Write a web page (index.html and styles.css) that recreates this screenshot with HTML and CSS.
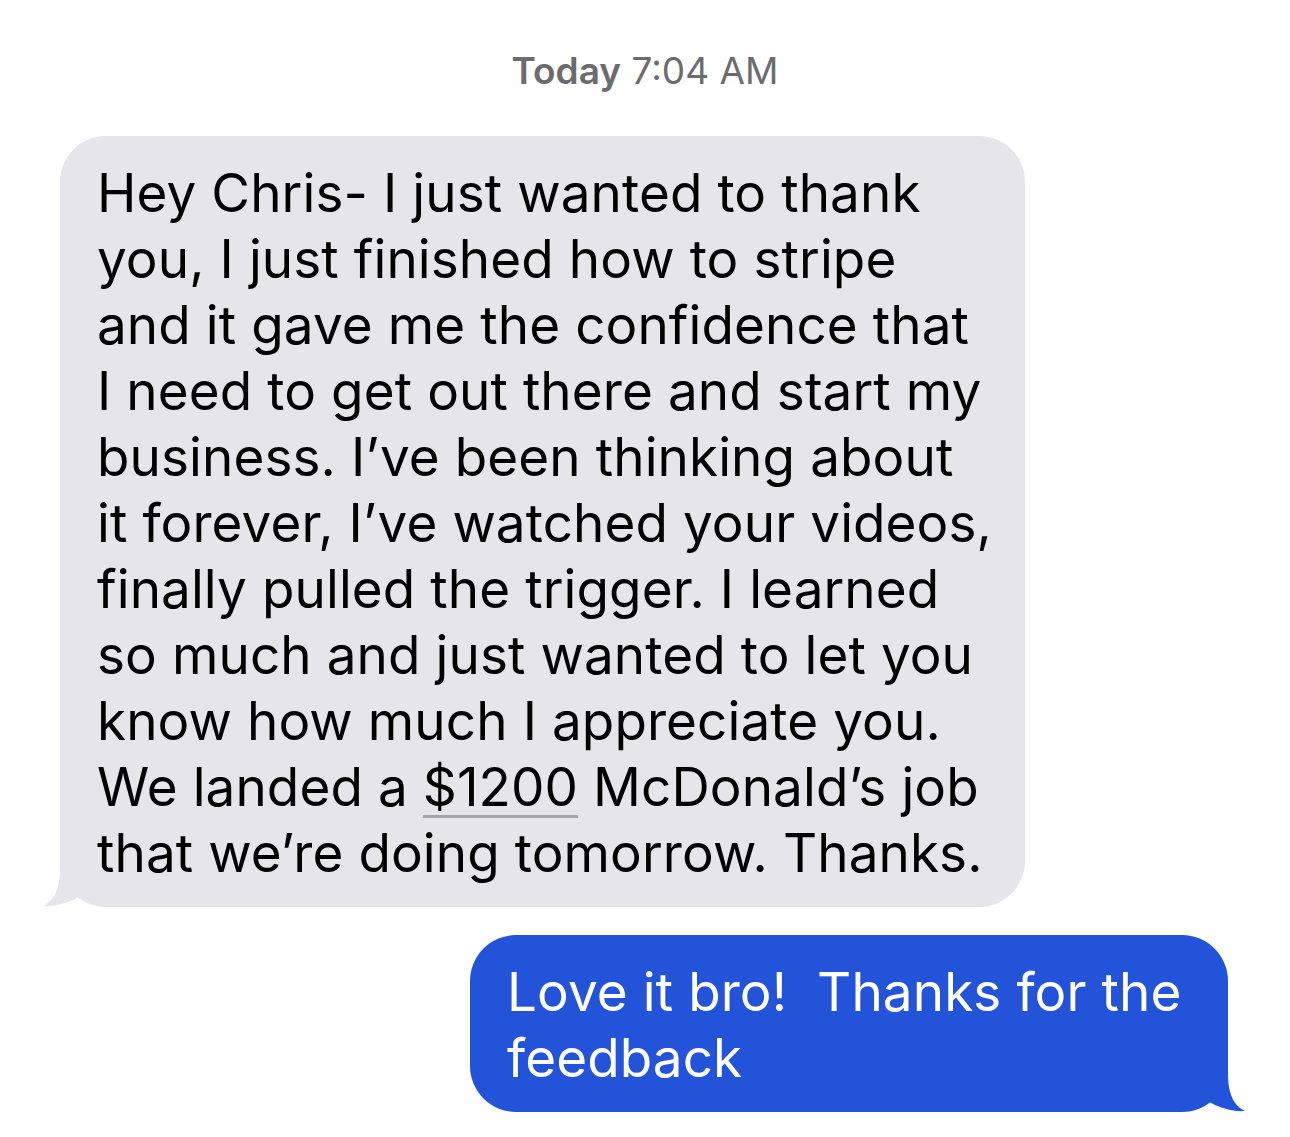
FILE: index.html
```html
<!DOCTYPE html>
<html>
<head>
<meta charset="utf-8">
<link rel="stylesheet" href="styles.css">
</head>
<body>
<div class="thread">
  <div class="stamp"><span class="day">Today</span> 7:04 AM</div>
  <div class="row row-in">
    <div class="bubble in">
      <span class="line">Hey Chris- I just wanted to thank</span>
      <span class="line">you, I just finished how to stripe</span>
      <span class="line">and it gave me the confidence that</span>
      <span class="line">I need to get out there and start my</span>
      <span class="line">business. I’ve been thinking about</span>
      <span class="line">it forever, I’ve watched your videos,</span>
      <span class="line">finally pulled the trigger. I learned</span>
      <span class="line">so much and just wanted to let you</span>
      <span class="line">know how much I appreciate you.</span>
      <span class="line">We landed a <span class="link">$1200</span> McDonald’s job</span>
      <span class="line">that we’re doing tomorrow. Thanks.</span>
      <svg class="tail tail-in" width="60" height="52" viewBox="0 0 60 52"><path d="M17 0 L17 14 C17 36 10 46 0 51 C 14 52 28 47 37 41 L 37 0 Z"/></svg>
    </div>
  </div>
  <div class="row row-out">
    <div class="bubble out">
      <span class="line">Love it bro!&nbsp; Thanks for the</span>
      <span class="line">feedback</span>
      <svg class="tail tail-out" width="60" height="52" viewBox="0 0 60 52"><path d="M43 0 L43 14 C43 36 50 46 60 51 C 46 52 32 47 23 41 L 23 0 Z"/></svg>
    </div>
  </div>
</div>
</body>
</html>
```

FILE: styles.css
```css
html, body {
  margin: 0;
  padding: 0;
  background: #ffffff;
}
body {
  font-family: Inter, "Noto Sans", sans-serif;
  width: 1290px;
  height: 1137px;
  overflow: hidden;
}
.thread {
  display: flex;
  flex-direction: column;
  padding-top: 47px;
}
.stamp {
  text-align: center;
  font-size: 37px;
  line-height: 48px;
  color: #6c6c70;
  margin-bottom: 41px;
}
.day {
  font-weight: 600;
}
.row {
  display: flex;
}
.row-in {
  padding-left: 60px;
  justify-content: flex-start;
}
.row-out {
  padding-right: 62px;
  justify-content: flex-end;
  margin-top: 28px;
}
.bubble {
  position: relative;
  border-radius: 46px;
  font-size: 53px;
  line-height: 66px;
  padding: 24px 0 21px 37px;
  box-sizing: border-box;
  letter-spacing: 0.1px;
}
.line {
  display: block;
  white-space: nowrap;
}
.in {
  background: #e5e5ea;
  color: #000000;
  width: 965px;
}
.out {
  background: #2353d9;
  color: #ffffff;
  width: 758px;
  padding-left: 37px;
}
.link {
  text-decoration: underline;
  text-decoration-color: #a3a3a8;
  text-decoration-thickness: 3px;
  text-underline-offset: 9px;
}
.tail {
  position: absolute;
  bottom: 0;
}
.tail-in {
  left: -17px;
  fill: #e5e5ea;
}
.tail-out {
  right: -17px;
  fill: #2353d9;
}
```
